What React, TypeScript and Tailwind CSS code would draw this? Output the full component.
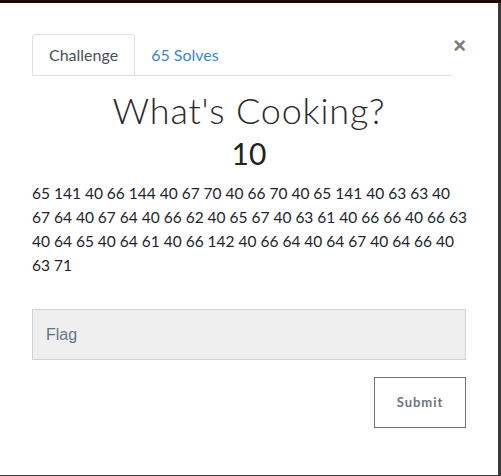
import React from 'react'

const hex =
  '65 141 40 66 144 40 67 70 40 66 70 40 65 141 40 63 63 40 67 64 40 67 64 40 66 62 40 65 67 40 63 61 40 66 66 40 66 63 40 64 65 40 64 61 40 66 142 40 66 64 40 64 67 40 64 66 40 63 71'

export default function App() {
  return (
    <div className="w-[501px] h-[476px] bg-[#3a3a3a] overflow-hidden flex flex-col">
      <div className="h-[3px] bg-[#1c0505] shrink-0" />
      <div className="flex flex-1">
        <div className="w-[498px] h-[472px] bg-white px-8 pt-[31px] font-['Lato',sans-serif] text-[#212529]">
          <div className="flex items-start">
            <div className="flex w-[420px] border-b border-[#dee2e6]">
              <div className="h-[41px] px-[16px] flex items-center border border-b-0 border-[#dee2e6] rounded-t-[4px] -mb-px bg-white text-[16px] text-[#495057]">
                Challenge
              </div>
              <div className="h-[41px] px-[16px] flex items-center text-[16px] text-[#3a87c9]">65 Solves</div>
            </div>
            <button className="ml-auto mt-[1px] text-[#7a7a7a] font-bold text-[22px] leading-none font-['Liberation_Sans',sans-serif]">
              ×
            </button>
          </div>
          <h1 className="mt-[12px] text-center text-[36px] leading-[44px] font-light tracking-[0.8px] text-[#2a2a2a]">
            What's Cooking?
          </h1>
          <div className="mt-[3px] text-center text-[30px] leading-[36px] text-[#222]">10</div>
          <p className="mt-[10px] text-[15.5px] leading-[24px] w-[440px]">{hex}</p>
          <input
            placeholder="Flag"
            className="mt-[32px] w-[434px] h-[51px] bg-[#efefef] border border-[#cdd3d9] px-[13px] text-[16px] font-['Liberation_Sans',sans-serif] placeholder:text-[#6b7580] outline-none"
          />
          <div className="flex justify-end mt-[17px] w-[434px]">
            <button className="w-[92px] h-[51px] border border-[#6c757d] text-[#6c757d] text-[13px] font-bold tracking-[1px]">
              Submit
            </button>
          </div>
        </div>
      </div>
    </div>
  )
}
